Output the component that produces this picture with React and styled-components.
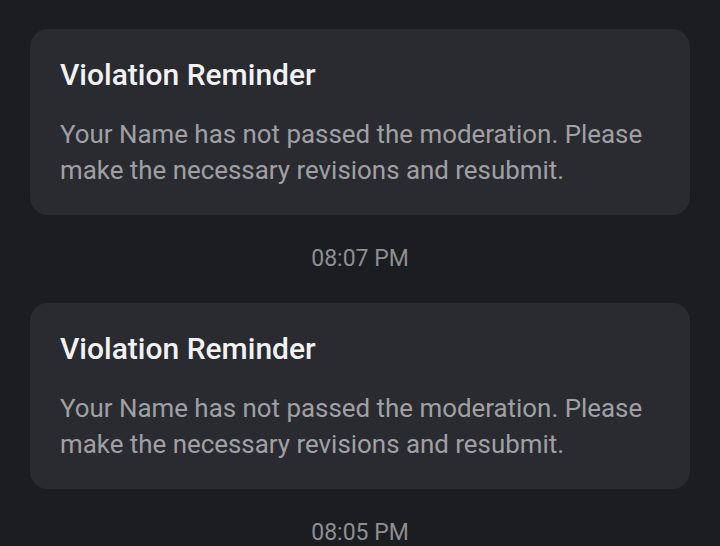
import styled, { createGlobalStyle } from "styled-components";

const notices = [
  { id: 1, title: "Violation Reminder", text: "Your Name has not passed the moderation. Please make the necessary revisions and resubmit.", time: "08:07 PM" },
  { id: 2, title: "Violation Reminder", text: "Your Name has not passed the moderation. Please make the necessary revisions and resubmit.", time: "08:05 PM" },
];

const GlobalStyle = createGlobalStyle`
  html, body {
    margin: 0;
    background: #1c1d21;
  }
  body {
    font-family: Roboto, "Noto Sans", sans-serif;
  }
`;

export default function App() {
  return (
    <>
      <GlobalStyle />
      <Feed>
        {notices.map((n) => (
          <Entry key={n.id}>
            <Card>
              <Title>{n.title}</Title>
              <Body>{n.text}</Body>
            </Card>
            <Time>{n.time}</Time>
          </Entry>
        ))}
      </Feed>
    </>
  );
}

const Feed = styled.div`
  height: 546px;
  overflow: hidden;
  padding: 29px 30px 0;
  box-sizing: border-box;
  display: flex;
  flex-direction: column;
`;

const Entry = styled.div`
  display: flex;
  flex-direction: column;
`;

const Card = styled.div`
  background: #2a2b30;
  border-radius: 18px;
  padding: 29px 30px 27px;
`;

const Title = styled.h2`
  margin: 0;
  font-size: 30px;
  line-height: 34px;
  font-weight: 500;
  color: #f2f2f2;
`;

const Body = styled.p`
  margin: 24px 0 0;
  font-size: 25.9px;
  line-height: 36px;
  color: #a0a0a4;
`;

const Time = styled.div`
  margin: 30px 0;
  text-align: center;
  font-size: 23px;
  line-height: 28px;
  color: #8e8e92;
`;
